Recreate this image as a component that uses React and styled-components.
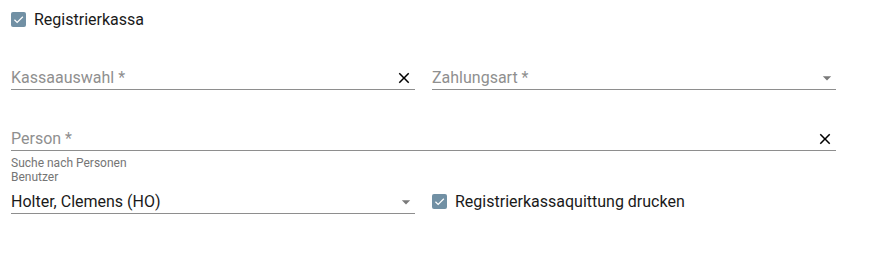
import React from 'react'
import styled, { createGlobalStyle } from 'styled-components'

const GlobalStyle = createGlobalStyle`
body {
    margin: 0;
    background: #ffffff;
    font-family: Roboto, "Liberation Sans", sans-serif;
    color: rgba(0, 0, 0, 0.87);
}
`

const Form = styled.div`
width: 825px;
padding: 10px 0 0 11px;
`

const CheckRow = styled.label`
display: flex;
align-items: center;
gap: 8px;
height: 19px;
font-size: 16px;
line-height: 19px;
color: #1a1a1a;
margin-bottom: ${props => props.$bottom || 0}px;
`

const Box = styled.span`
width: 15px;
height: 15px;
border-radius: 2px;
background: #7190a4;
display: flex;
align-items: center;
justify-content: center;
flex-shrink: 0;
`

const Row = styled.div`
display: grid;
grid-template-columns: ${props => props.$cols || '1fr 1fr'};
column-gap: 17px;
align-items: end;
margin-top: ${props => props.$top || 0}px;
`

const Field = styled.div`
display: flex;
align-items: flex-end;
border-bottom: 1px solid #8e8e8e;
padding-bottom: 2px;
margin-top: ${props => props.$top || 0}px;
`

const Value = styled.div`
flex: 1;
font-size: 16px;
line-height: 19px;
color: ${props => props.$placeholder ? '#8f8f8f' : '#1a1a1a'};
white-space: nowrap;
`

const IconSlot = styled.span`
display: flex;
align-items: center;
justify-content: center;
width: 20px;
height: 19px;
margin-right: ${props => props.$right || 0}px;
`

const Helper = styled.div`
font-size: 12px;
line-height: 14px;
color: #757575;
margin-top: ${props => props.$top || 0}px;
`

const Stack = styled.div`
display: flex;
flex-direction: column;
`

const CloseIcon = () => (
    <svg width="18" height="18" viewBox="0 0 24 24">
        <path fill="#000" d="M19 6.41L17.59 5 12 10.59 6.41 5 5 6.41 10.59 12 5 17.59 6.41 19 12 13.41 17.59 19 19 17.59 13.41 12z" />
    </svg>
)

const ArrowIcon = () => (
    <svg width="22" height="22" viewBox="0 0 24 24">
        <path fill="#7a7a7a" d="M7 10l5 5 5-5z" />
    </svg>
)

const Check = () => (
    <Box>
        <svg width="13" height="13" viewBox="0 0 24 24">
            <path fill="none" stroke="#fff" strokeWidth="2.2" d="M4.5 12.5l5 5L20 7" />
        </svg>
    </Box>
)

function App() {
    return (
        <Form>
            <GlobalStyle />
            <CheckRow>
                <Check />
                Registrierkassa
            </CheckRow>

            <Row $top={39}>
                <Field>
                    <Value $placeholder>Kassaauswahl *</Value>
                    <IconSlot $right={1}><CloseIcon /></IconSlot>
                </Field>
                <Field>
                    <Value $placeholder>Zahlungsart *</Value>
                    <IconSlot $right={-1}><ArrowIcon /></IconSlot>
                </Field>
            </Row>

            <Row $cols="1fr" $top={39}>
                <Field>
                    <Value $placeholder>Person *</Value>
                    <IconSlot $right={1}><CloseIcon /></IconSlot>
                </Field>
            </Row>
            <Helper $top={5}>Suche nach Personen</Helper>

            <Row>
                <Stack>
                    <Helper>Benutzer</Helper>
                    <Field $top={8}>
                        <Value>Holter, Clemens (HO)</Value>
                        <IconSlot $right={-1}><ArrowIcon /></IconSlot>
                    </Field>
                </Stack>
                <CheckRow $bottom={3}>
                    <Check />
                    Registrierkassaquittung drucken
                </CheckRow>
            </Row>
        </Form>
    )
}

export default App
